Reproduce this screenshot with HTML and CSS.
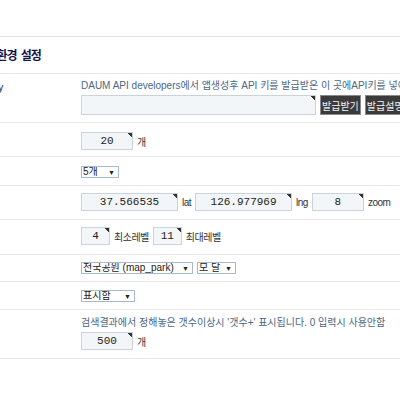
FILE: index.html
```html
<!DOCTYPE html>
<html lang="ko">
<head>
    <meta charset="UTF-8">
    <title>지도 환경 설정</title>
    <link rel="stylesheet" href="styles.css">
</head>
<body>
    <div class="page">
        <h3 class="section-title">지도 환경 설정</h3>

        <div class="row row-api">
            <div class="label">API Key</div>
            <div class="field stack">
                <p class="desc">DAUM API developers에서 앱생성후 API 키를 발급받은 이 곳에API키를 넣어주세요.</p>
                <div class="line">
                    <input class="txt txt-key" type="text" value="">
                    <button class="btn">발급받기</button>
                    <button class="btn">발급설명서</button>
                </div>
            </div>
        </div>

        <div class="row row-count">
            <div class="label">목록수</div>
            <div class="field line">
                <input class="txt txt-md" type="text" value="20">
                <span class="unit">개</span>
            </div>
        </div>

        <div class="row row-page">
            <div class="label">페이지</div>
            <div class="field line">
                <span class="sel-wrap"><select class="sel sel-sm"><option>5개</option></select></span>
            </div>
        </div>

        <div class="row row-pos">
            <div class="label">좌표</div>
            <div class="field line">
                <input class="txt txt-lg" type="text" value="37.566535">
                <span class="unit">lat</span>
                <input class="txt txt-lg" type="text" value="126.977969">
                <span class="unit">lng</span>
                <input class="txt txt-md" type="text" value="8">
                <span class="unit">zoom</span>
            </div>
        </div>

        <div class="row row-level">
            <div class="label">레벨</div>
            <div class="field line">
                <input class="txt txt-xs" type="text" value="4">
                <span class="unit">최소레벨</span>
                <input class="txt txt-xs" type="text" value="11">
                <span class="unit">최대레벨</span>
            </div>
        </div>

        <div class="row row-type">
            <div class="label">스킨</div>
            <div class="field line">
                <span class="sel-wrap"><select class="sel sel-xl"><option>전국공원 (map_park)</option></select></span>
                <span class="sel-wrap"><select class="sel sel-md"><option>모 달</option></select></span>
            </div>
        </div>

        <div class="row row-show">
            <div class="label">표시</div>
            <div class="field line">
                <span class="sel-wrap"><select class="sel sel-lg"><option>표시함</option></select></span>
            </div>
        </div>

        <div class="row row-limit">
            <div class="label">제한</div>
            <div class="field stack">
                <p class="desc">검색결과에서 정해놓은 갯수이상시 '갯수+' 표시됩니다. 0 입력시 사용안함</p>
                <div class="line">
                    <input class="txt txt-md" type="text" value="500">
                    <span class="unit">개</span>
                </div>
            </div>
        </div>
    </div>
</body>
</html>
```

FILE: styles.css
```css
body {
    margin: 0;
    overflow: hidden;
    background: #fff;
    font-family: "Liberation Sans", "Noto Sans CJK KR", sans-serif;
    font-size: 10px;
    color: #333;
}

.page {
    width: 640px;
    margin-left: -120px;
}

.section-title {
    margin: 36px 0 0;
    height: 38px;
    padding: 11px 0 0 92px;
    box-sizing: border-box;
    border-top: 1px solid #e2e2e2;
    border-bottom: 1px solid #e8e8e8;
    font-size: 12px;
    letter-spacing: -1px;
    word-spacing: 2px;
    line-height: 16px;
    color: #15154a;
    font-weight: bold;
}

.row {
    display: flex;
    border-bottom: 1px solid #e8e8e8;
}

.label {
    width: 201px;
    padding-left: 87px;
    box-sizing: border-box;
    color: #15154a;
    line-height: 14px;
    padding-top: 7px;
}

.field {
    flex: 1;
}

.stack {
    display: flex;
    flex-direction: column;
    gap: 2px;
}

.line {
    display: flex;
    align-items: center;
    gap: 4px;
    white-space: nowrap;
}

.desc {
    margin: 0;
    line-height: 14px;
    color: #4b6784;
    white-space: nowrap;
}

.unit {
    color: #333;
    letter-spacing: -0.5px;
}

/* text boxes */
.txt {
    height: 18px;
    box-sizing: border-box;
    border: 1px solid #c8d3dc;
    background: linear-gradient(225deg, #333 3px, transparent 3px), #f2f6f8;
    padding: 0;
    text-align: center;
    font-family: "Liberation Mono", monospace;
    font-size: 11px;
    color: #222;
}

.txt-key { width: 235px; height: 20px; }
.txt-xs { width: 29px; }
.txt-md { width: 52px; }
.txt-lg { width: 97px; }

.btn {
    height: 20px;
    padding: 0 1px;
    border: 1px solid #8a8a8a;
    background: #3b3b3b;
    color: #f4f4f4;
    font-family: "Liberation Sans", "Noto Sans CJK KR", sans-serif;
    font-size: 10px;
    cursor: pointer;
}

/* selects */
.sel-wrap {
    position: relative;
    display: inline-block;
}

.sel-wrap::after {
    content: "▼";
    position: absolute;
    right: 4px;
    top: 1px;
    font-size: 7px;
    line-height: 11px;
    color: #222;
    pointer-events: none;
}

.sel {
    appearance: none;
    -webkit-appearance: none;
    display: block;
    height: 12px;
    box-sizing: border-box;
    border: 1px solid #a9b8c6;
    background: #fff;
    padding: 0 1px;
    font-family: "Liberation Sans", "Noto Sans CJK KR", sans-serif;
    font-size: 10px;
    line-height: 10px;
    color: #222;
    border-radius: 0;
}

.sel-sm { width: 38px; }
.sel-md { width: 39px; }
.sel-lg { width: 54px; }
.sel-xl { width: 112px; }

/* row spacing */
.row-api .field { padding: 5px 0 7px; }
.row-count .field { padding: 9px 0 6px; }
.row-page .field { padding: 9px 0 7px; }
.row-pos .field { padding: 7px 0 8px; }
.row-level .field { padding: 7px 0 9px; }
.row-type .field { padding: 7px 0 7px; }
.row-show .field { padding: 8px 0 7px; }
.row-limit .field { padding: 6px 0 8px; }
```
